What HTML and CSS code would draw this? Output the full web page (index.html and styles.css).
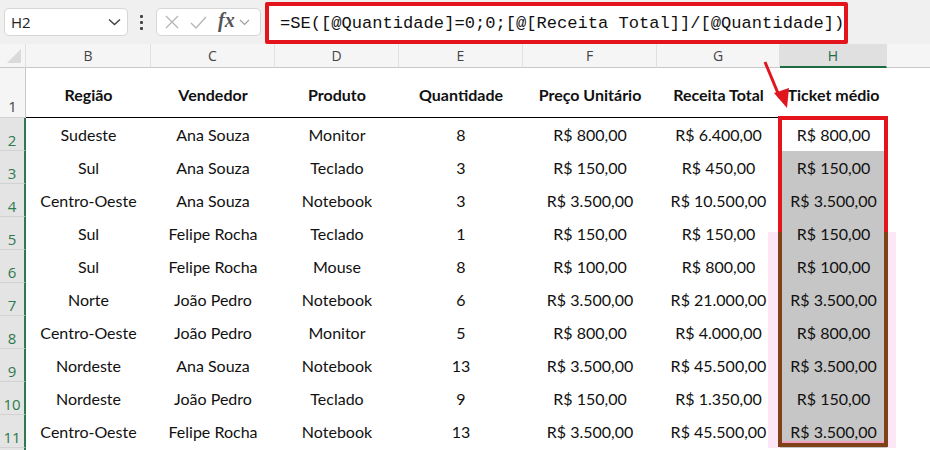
FILE: index.html
```html
<!DOCTYPE html>
<html lang="pt-BR">
<head>
<meta charset="utf-8">
<title>Planilha</title>
<link rel="stylesheet" href="styles.css">
</head>
<body>
<div class="app">
  <div class="topbar">
    <div class="namebox">
      <span class="nb-text">H2</span>
      <svg class="nb-chev" width="13" height="8" viewBox="0 0 13 8"><path d="M1 1.5 L6.5 6.5 L12 1.5" fill="none" stroke="#444" stroke-width="1.5"/></svg>
    </div>
    <div class="dots"><span></span><span></span><span></span></div>
    <div class="fxbox">
      <svg width="14" height="14" viewBox="0 0 14 14"><path d="M1 1 L13 13 M13 1 L1 13" stroke="#b5b5b5" stroke-width="1.3" fill="none"/></svg>
      <svg width="17" height="13" viewBox="0 0 17 13"><path d="M1 7 L6 12 L16 1" stroke="#b5b5b5" stroke-width="1.3" fill="none"/></svg>
      <span class="fx">fx</span>
      <svg width="11" height="7" viewBox="0 0 11 7"><path d="M1 1 L5.5 5.5 L10 1" fill="none" stroke="#a0a0a0" stroke-width="1.2"/></svg>
    </div>
    <div class="formula-frame">
      <div class="formula">=SE([@Quantidade]=0;0;[@[Receita Total]]/[@Quantidade])</div>
    </div>
  </div>

  <div class="sheet">
    <div class="grid">
      <div class="ch corner"><span class="tri"></span></div>
      <div class="ch">B</div><div class="ch">C</div><div class="ch">D</div><div class="ch">E</div><div class="ch">F</div><div class="ch">G</div><div class="ch sel">H</div><div class="ch last"></div>

      <div class="rh r1">1</div>
      <div class="hd">Região</div><div class="hd">Vendedor</div><div class="hd">Produto</div><div class="hd">Quantidade</div><div class="hd">Preço Unitário</div><div class="hd">Receita Total</div><div class="hd">Ticket médio</div><div class="blank"></div>

      <div class="rh">2</div>
      <div class="c">Sudeste</div><div class="c">Ana Souza</div><div class="c">Monitor</div><div class="c">8</div><div class="c">R$ 800,00</div><div class="c">R$ 6.400,00</div><div class="c h">R$ 800,00</div><div class="blank"></div>

      <div class="rh">3</div>
      <div class="c">Sul</div><div class="c">Ana Souza</div><div class="c">Teclado</div><div class="c">3</div><div class="c">R$ 150,00</div><div class="c">R$ 450,00</div><div class="c h g">R$ 150,00</div><div class="blank"></div>

      <div class="rh">4</div>
      <div class="c">Centro-Oeste</div><div class="c">Ana Souza</div><div class="c">Notebook</div><div class="c">3</div><div class="c">R$ 3.500,00</div><div class="c">R$ 10.500,00</div><div class="c h g">R$ 3.500,00</div><div class="blank"></div>

      <div class="rh">5</div>
      <div class="c">Sul</div><div class="c">Felipe Rocha</div><div class="c">Teclado</div><div class="c">1</div><div class="c">R$ 150,00</div><div class="c">R$ 150,00</div><div class="c h g">R$ 150,00</div><div class="blank"></div>

      <div class="rh">6</div>
      <div class="c">Sul</div><div class="c">Felipe Rocha</div><div class="c">Mouse</div><div class="c">8</div><div class="c">R$ 100,00</div><div class="c">R$ 800,00</div><div class="c h g">R$ 100,00</div><div class="blank"></div>

      <div class="rh">7</div>
      <div class="c">Norte</div><div class="c">João Pedro</div><div class="c">Notebook</div><div class="c">6</div><div class="c">R$ 3.500,00</div><div class="c">R$ 21.000,00</div><div class="c h g">R$ 3.500,00</div><div class="blank"></div>

      <div class="rh">8</div>
      <div class="c">Centro-Oeste</div><div class="c">João Pedro</div><div class="c">Monitor</div><div class="c">5</div><div class="c">R$ 800,00</div><div class="c">R$ 4.000,00</div><div class="c h g">R$ 800,00</div><div class="blank"></div>

      <div class="rh">9</div>
      <div class="c">Nordeste</div><div class="c">Ana Souza</div><div class="c">Notebook</div><div class="c">13</div><div class="c">R$ 3.500,00</div><div class="c">R$ 45.500,00</div><div class="c h g">R$ 3.500,00</div><div class="blank"></div>

      <div class="rh">10</div>
      <div class="c">Nordeste</div><div class="c">João Pedro</div><div class="c">Teclado</div><div class="c">9</div><div class="c">R$ 150,00</div><div class="c">R$ 1.350,00</div><div class="c h g">R$ 150,00</div><div class="blank"></div>

      <div class="rh">11</div>
      <div class="c">Centro-Oeste</div><div class="c">Felipe Rocha</div><div class="c">Notebook</div><div class="c">13</div><div class="c">R$ 3.500,00</div><div class="c">R$ 45.500,00</div><div class="c h g">R$ 3.500,00</div><div class="blank"></div>

      <div class="rh"></div>
      <div class="c"></div><div class="c"></div><div class="c"></div><div class="c"></div><div class="c"></div><div class="c"></div><div class="c"></div><div class="blank"></div>
    </div>

    <div class="pink"></div>
    <div class="box-red"></div>
    <div class="box-brown"></div>
    <svg class="arrow" width="40" height="60" viewBox="0 0 40 60">
      <line x1="5" y1="2" x2="20" y2="38" stroke="#e0161e" stroke-width="3"/>
      <polygon points="14,33 29,28 27,48" fill="#e0161e"/>
    </svg>
  </div>
</div>
</body>
</html>
```

FILE: styles.css
```css
html, body {
  margin: 0;
  padding: 0;
  background: #ffffff;
}
body {
  width: 930px;
  height: 450px;
  overflow: hidden;
  font-family: Lato, "Open Sans", sans-serif;
}
.app {
  width: 930px;
  height: 450px;
  display: flex;
  flex-direction: column;
}

/* ---------- formula bar ---------- */
.topbar {
  height: 44px;
  flex: none;
  background: #f0f0f0;
  display: flex;
  align-items: flex-start;
  position: relative;
}
.namebox {
  margin: 8px 0 0 4px;
  width: 124px;
  height: 28px;
  box-sizing: border-box;
  background: #fff;
  border: 1px solid #d6d6d6;
  border-radius: 5px;
  display: flex;
  align-items: center;
  justify-content: space-between;
  padding: 0 6px 0 6px;
}
.nb-text {
  font-family: "Open Sans", sans-serif;
  font-size: 15px;
  color: #222;
}
.dots {
  margin: 15px 0 0 12px;
  width: 4px;
  display: flex;
  flex-direction: column;
  gap: 3px;
}
.dots span {
  width: 3px;
  height: 3px;
  background: #444;
  border-radius: 1px;
}
.fxbox {
  margin: 8px 0 0 12px;
  width: 105px;
  height: 28px;
  box-sizing: border-box;
  background: #fff;
  border: 1px solid #d6d6d6;
  border-radius: 5px;
  display: flex;
  align-items: center;
  gap: 11px;
  padding: 0 6px 0 8px;
}
.fx {
  font-family: "Liberation Serif", serif;
  font-style: italic;
  font-weight: bold;
  font-size: 20px;
  color: #555;
  margin-right: -7px;
  margin-top: -3px;
}
.formula-frame {
  margin: 2px 0 0 4px;
  width: 583px;
  height: 42px;
  box-sizing: border-box;
  border: 4px solid #e3141b;
  border-radius: 2px;
  background: #fff;
  display: flex;
  align-items: center;
  padding-left: 11px;
}
.formula {
  font-family: "Liberation Mono", "DejaVu Sans Mono", monospace;
  font-size: 17.1px;
  color: #111;
  white-space: nowrap;
  margin-top: 1px;
}

/* ---------- sheet ---------- */
.sheet {
  position: relative;
  flex: 1;
  background: #fff;
  overflow: hidden;
}
.grid {
  position: relative;
  z-index: 1;
  display: grid;
  grid-template-columns: 26px 125px 124px 124px 124px 134px 123px 107px 43px;
  grid-template-rows: 24px 50px repeat(11, 33px);
  font-size: 16px;
  color: #111;
}
.ch {
  background: #f5f5f5;
  border-bottom: 1px solid #c8c8c8;
  border-right: 1px solid #e0e0e0;
  box-sizing: border-box;
  display: flex;
  align-items: center;
  justify-content: center;
  font-family: "Open Sans", sans-serif;
  font-size: 14px;
  color: #444;
}
.ch.last { border-right: none; }
.ch.sel {
  background: #e0e0e0;
  color: #1e6b41;
  border-bottom: 2px solid #1e6b41;
}
.ch.corner {
  position: relative;
  background: #f5f5f5;
}
.tri {
  position: absolute;
  right: 4px;
  bottom: 4px;
  width: 0;
  height: 0;
  border-left: 14px solid transparent;
  border-bottom: 14px solid #dadada;
}
.rh {
  background: #e4e4e4;
  border-right: 2px solid #2e7a4d;
  border-bottom: 1px solid #d2d2d2;
  box-sizing: border-box;
  display: flex;
  align-items: flex-end;
  justify-content: center;
  padding-bottom: 2px;
  font-family: "Open Sans", sans-serif;
  font-size: 15px;
  color: #2e7a4d;
  line-height: 1;
}
.rh.r1 {
  background: #f5f5f5;
  color: #444;
  border-right: 1px solid #c8c8c8;
  padding-bottom: 3px;
}
.hd {
  font-weight: bold;
  display: flex;
  align-items: center;
  justify-content: center;
  padding-top: 4px;
  box-sizing: border-box;
  border-bottom: 1px solid #000;
  white-space: nowrap;
}
.blank { }
.c {
  display: flex;
  align-items: center;
  justify-content: center;
  white-space: nowrap;
}
.c.g {
  background: #c6c6c6;
}

/* ---------- annotations ---------- */
.pink {
  position: absolute;
  z-index: 0;
  left: 768px;
  top: 188px;
  width: 128px;
  height: 216px;
  background: #fde6f6;
}
.box-red {
  position: absolute;
  z-index: 2;
  left: 778px;
  top: 72px;
  width: 110px;
  height: 116px;
  box-sizing: border-box;
  border: 4px solid #e3141b;
  border-bottom: none;
}
.box-brown {
  position: absolute;
  z-index: 2;
  left: 778px;
  top: 188px;
  width: 110px;
  height: 215px;
  box-sizing: border-box;
  border: 4px solid #7f4218;
  border-top: none;
  box-shadow: inset 0 -2px 0 #f3a1c3;
}
.arrow {
  position: absolute;
  z-index: 2;
  left: 760px;
  top: 16px;
}
```
